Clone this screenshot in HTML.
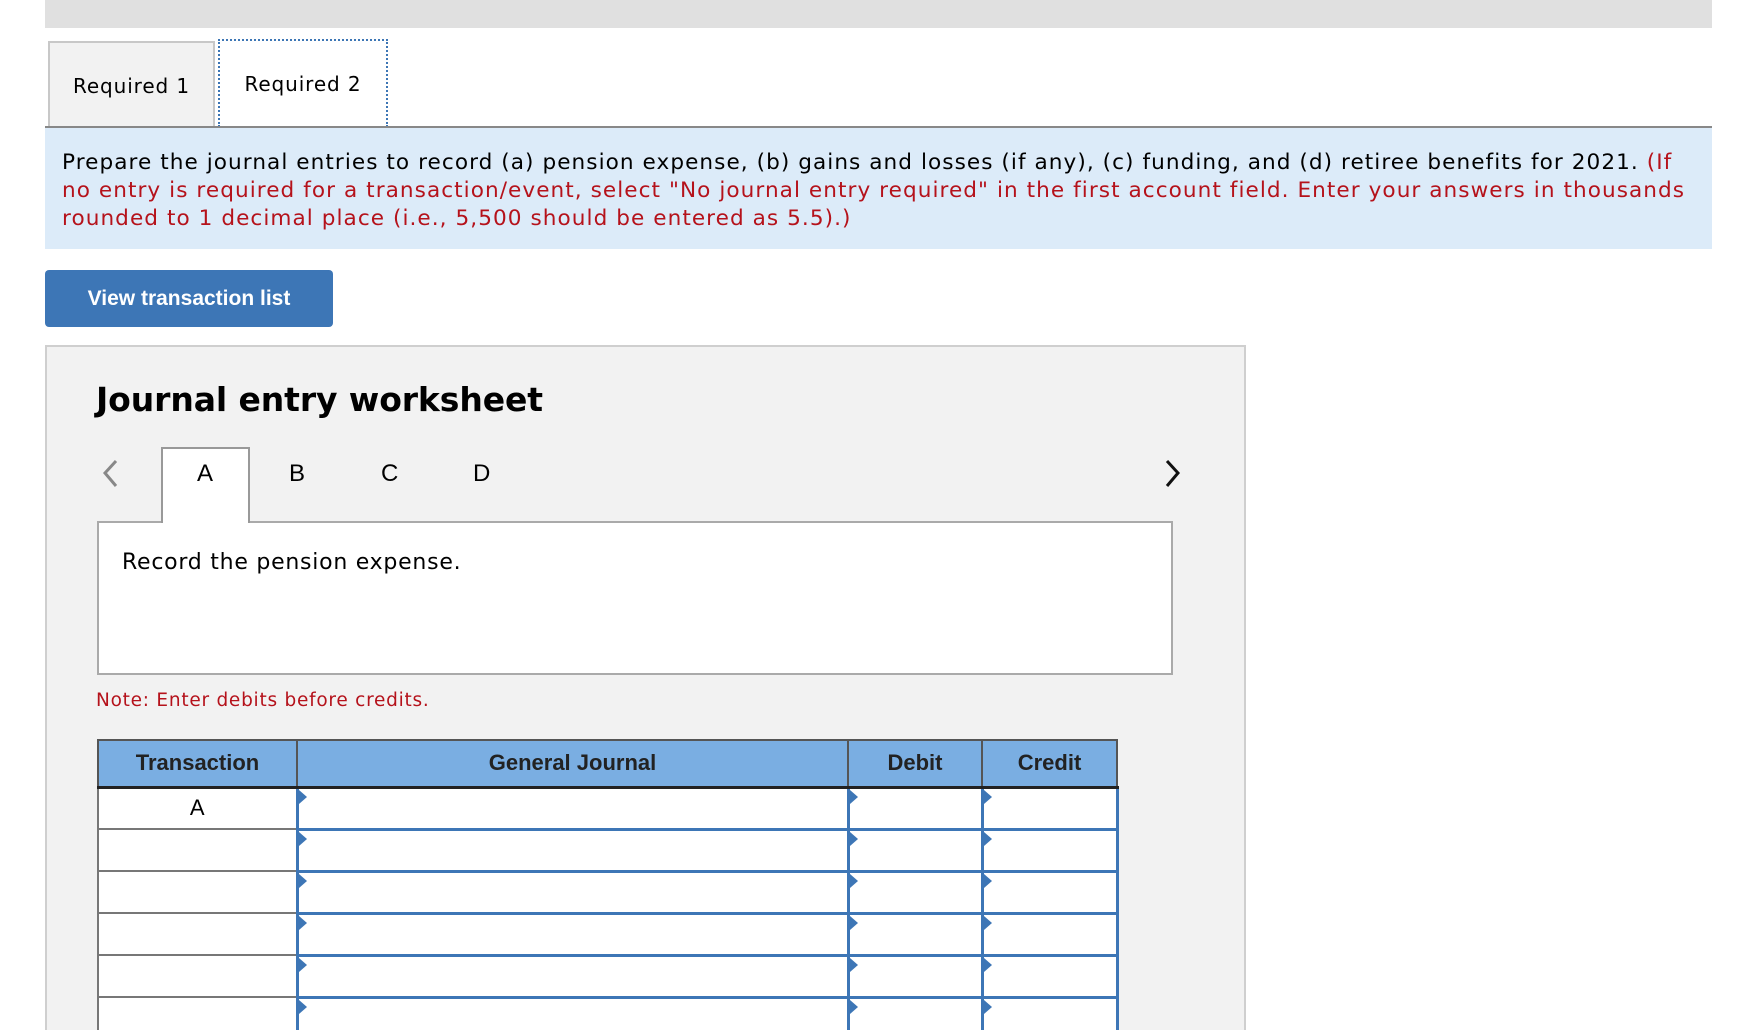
<!DOCTYPE html>
<html><head><meta charset="utf-8"><style>
*{box-sizing:border-box;margin:0;padding:0}
html,body{width:1748px;height:1030px;overflow:hidden}
body{background:#fff;font-family:"DejaVu Sans","Liberation Sans",sans-serif;color:#000}
#wrap{position:relative;width:1748px;height:1030px;overflow:hidden}
.abs{position:absolute}
.topbar{left:45px;top:0;width:1667px;height:28px;background:#e0e0e0}
.tab{top:40px;height:88px;font-size:20px;letter-spacing:0.9px;display:flex;align-items:center;justify-content:center}
.t1{left:48px;width:167px;background:#f2f2f2;border:2px solid #c8c8c8;border-bottom:none;top:41px;height:87px}
.t2{left:218px;width:170px;background:#fff;border:2px dotted #3d76b5;border-bottom:none;top:39px}
.tabline{left:45px;top:126px;width:1667px;height:2px;background:#888}
.info{left:45px;top:128px;width:1667px;height:121px;background:#dcebf9;padding:21px 14px 0 17px;font-size:21.6px;line-height:28px;letter-spacing:1.05px}
.red{color:#b5121b}
.btn{left:45px;top:270px;width:288px;height:57px;background:#3d76b6;border-radius:4px;color:#fff;font-family:"Liberation Sans",sans-serif;font-weight:bold;font-size:21px;display:flex;align-items:center;justify-content:center}
.panel{left:45px;top:345px;width:1201px;height:720px;background:#f2f2f2;border:2px solid #cfcfcf}
.title{left:96px;top:380px;font-size:33px;font-weight:bold;letter-spacing:-0.1px}
.ltr{top:460px;font-family:"Liberation Sans",sans-serif;font-size:24px}
.tabA{left:161px;top:447px;width:89px;height:76px;background:#fff;border:2px solid #999;border-bottom:none;z-index:2}
.box{left:97px;top:521px;width:1076px;height:154px;background:#fff;border:2px solid #aaa}
.rec{left:122px;top:550px;font-size:22px;letter-spacing:0.75px}
.note{left:96px;top:690px;font-size:18.5px;color:#b5121b;letter-spacing:0.75px}
table{position:absolute;left:97px;top:739px;border-collapse:collapse;font-family:"Liberation Sans",sans-serif;table-layout:fixed;width:1019px}
th{background:#7aaee2;height:47px;font-size:22px;font-weight:bold;color:#222;border:2px solid #555;border-bottom:3px solid #222}
td{height:42px;background:#fff;position:relative}
td.tx{border:2px solid #777;border-top:none;text-align:center;font-size:22px}
td.in{border:3px solid #3d76b6;border-top-width:2px}
td.in::before{content:"";position:absolute;left:0;top:1px;border-left:8px solid #3d76b6;border-top:7px solid transparent;border-bottom:7px solid transparent}
</style></head><body><div id="wrap">
<div class="abs topbar"></div>
<div class="abs tab t1">Required 1</div>
<div class="abs tab t2">Required 2</div>
<div class="abs tabline"></div>
<div class="abs info">Prepare the journal entries to record (a) pension expense, (b) gains and losses (if any), (c) funding, and (d) retiree benefits for 2021. <span class="red">(If no entry is required for a transaction/event, select "No journal entry required" in the first account field. Enter your answers in thousands rounded to 1 decimal place (i.e., 5,500 should be entered as 5.5).)</span></div>
<div class="abs btn">View transaction list</div>
<div class="abs panel"></div>
<div class="abs title">Journal entry worksheet</div>
<svg class="abs" style="left:100px;top:458px" width="22" height="32"><path d="M16 3 L5 15 L16 28" fill="none" stroke="#888" stroke-width="3"/></svg>
<svg class="abs" style="left:1162px;top:458px" width="22" height="32"><path d="M5 3 L16 15 L5 28" fill="none" stroke="#111" stroke-width="3"/></svg>
<div class="abs tabA"></div>
<div class="abs ltr" style="left:197px;z-index:3">A</div>
<div class="abs ltr" style="left:289px">B</div>
<div class="abs ltr" style="left:381px">C</div>
<div class="abs ltr" style="left:473px">D</div>
<div class="abs box"></div>
<div class="abs tabA" style="height:4px;top:519px;border:none;left:163px;width:85px"></div>
<div class="abs rec">Record the pension expense.</div>
<div class="abs note">Note: Enter debits before credits.</div>
<table>
<colgroup><col style="width:199px"><col style="width:551px"><col style="width:134px"><col style="width:135px"></colgroup>
<tr><th>Transaction</th><th>General Journal</th><th>Debit</th><th>Credit</th></tr>
<tr><td class="tx">A</td><td class="in"></td><td class="in"></td><td class="in"></td></tr>
<tr><td class="tx"></td><td class="in"></td><td class="in"></td><td class="in"></td></tr>
<tr><td class="tx"></td><td class="in"></td><td class="in"></td><td class="in"></td></tr>
<tr><td class="tx"></td><td class="in"></td><td class="in"></td><td class="in"></td></tr>
<tr><td class="tx"></td><td class="in"></td><td class="in"></td><td class="in"></td></tr>
<tr><td class="tx"></td><td class="in"></td><td class="in"></td><td class="in"></td></tr>
<tr><td class="tx"></td><td class="in"></td><td class="in"></td><td class="in"></td></tr>
</table>
</div></body></html>
